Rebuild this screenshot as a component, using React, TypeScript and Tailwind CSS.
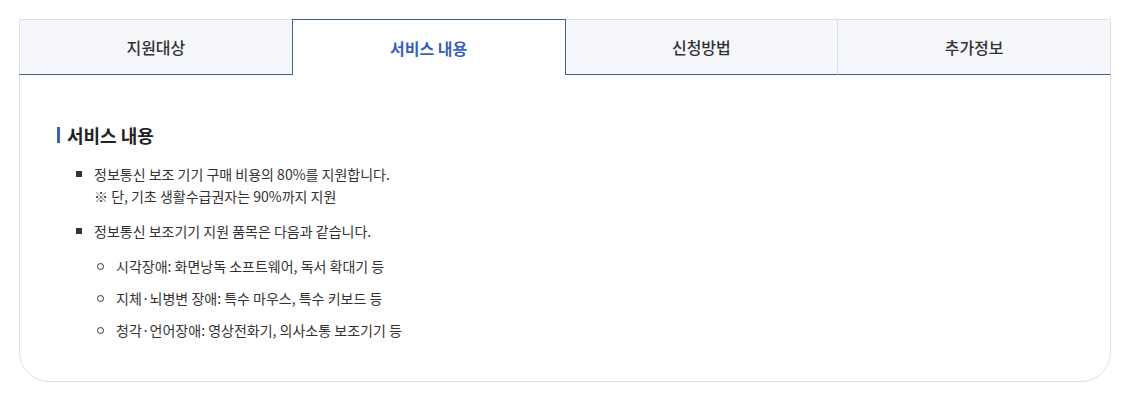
import React from 'react';

const tabs = ['지원대상', '서비스 내용', '신청방법', '추가정보'];

const subItems = [
  '시각장애: 화면낭독 소프트웨어, 독서 확대기 등',
  '지체·뇌병변 장애: 특수 마우스, 특수 키보드 등',
  '청각·언어장애: 영상전화기, 의사소통 보조기기 등',
];

const App: React.FC = () => {
  return (
    <div
      className="bg-white w-[1130px] h-[401px] pt-[19px] px-[19px]"
      style={{ fontFamily: '"Noto Sans CJK KR", "Noto Sans", sans-serif' }}
    >
      <div className="w-[1092px] h-[363px] border border-[#dcdfe5] rounded-b-[30px]">
        <div className="flex h-[56px] -mt-px -mx-px">
          {tabs.map((t, i) =>
            i === 1 ? (
              <div
                key={t}
                className="flex-1 flex items-center justify-center bg-white border border-b-0 border-[#3f5e9e] text-[16px] font-bold text-[#3b5fc0]"
              >
                {t}
              </div>
            ) : (
              <div
                key={t}
                className={`flex-1 flex items-center justify-center bg-[#f5f7fa] border-t border-[#dcdfe5] border-b border-b-[#3f5e9e] text-[16px] font-medium text-[#333333] ${
                  i === 3 ? 'border-l border-r' : i === 0 ? 'border-l' : ''
                }`}
              >
                {t}
              </div>
            )
          )}
        </div>

        <div className="pl-[37px] pt-[48px]">
          <h3 className="flex items-center text-[18px] font-bold text-[#222] leading-[24px]">
            <span className="w-[3px] h-[16px] bg-[#3b5fc0] mr-[7px]" />
            서비스 내용
          </h3>

          <ul className="mt-[16px] pl-[19px] text-[14px] text-[#333] leading-[22px]">
            <li className="flex">
              <span className="w-[6px] h-[6px] bg-[#333] mt-[8px] mr-[12px] shrink-0" />
              <div>
                <p>정보통신 보조 기기 구매 비용의 80%를 지원합니다.</p>
                <p>※ 단, 기초 생활수급권자는 90%까지 지원</p>
              </div>
            </li>
            <li className="flex mt-[13px]">
              <span className="w-[6px] h-[6px] bg-[#333] mt-[8px] mr-[12px] shrink-0" />
              <div>
                <p>정보통신 보조기기 지원 품목은 다음과 같습니다.</p>
              </div>
            </li>
            <ul className="pl-[21px] mt-[13px] flex flex-col gap-[10px]">
              {subItems.map((s) => (
                <li key={s} className="flex items-center">
                  <span className="w-[7px] h-[7px] rounded-full border border-[#333] mr-[12px] shrink-0" />
                  {s}
                </li>
              ))}
            </ul>
          </ul>
        </div>
      </div>
    </div>
  );
};

export default App;
